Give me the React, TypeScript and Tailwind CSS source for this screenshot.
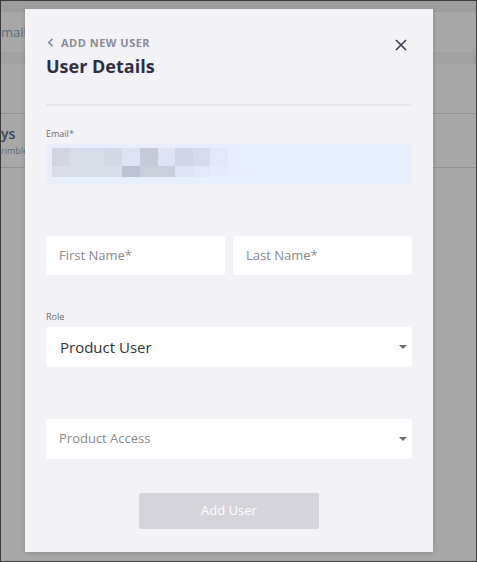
import React from "react";

const row1 = [
  "bg-[#d0d5e0]",
  "bg-[#d7dce7]",
  "bg-[#d7dce7]",
  "bg-[#d4d9e4]",
  "bg-[#dee3f0]",
  "bg-[#c6cbd6]",
  "bg-[#dfe4f1]",
  "bg-[#d1d6e2]",
  "bg-[#d7dce8]",
  "bg-[#e3e8f5]",
];
const row2 = [
  "bg-[#d8dde8]",
  "bg-[#d8dde8]",
  "bg-[#d8dde8]",
  "bg-[#d8dde8]",
  "bg-[#bdc2ce]",
  "bg-[#c9ced9]",
  "bg-[#c9ced9]",
  "bg-[#dfe4f0]",
  "bg-[#e3e8f4]",
  "bg-[#e6ebf7]",
];

function Caret() {
  return (
    <svg width="8" height="4" viewBox="0 0 8 4" className="shrink-0">
      <polygon points="0,0 8,0 4,4" fill="#6b6b6b" />
    </svg>
  );
}

export default function App() {
  return (
    <div className="w-[477px] h-[562px] relative overflow-hidden border border-[#3a3a3a] bg-[#a7a7a7] font-['Open_Sans',sans-serif]">
      {/* background page (dimmed) */}
      <div className="h-[11px] bg-[#9d9d9d]" />
      <div className="h-[40px] flex items-center">
        <span className="text-[13px] leading-[16px] text-[#566a80]">mail</span>
      </div>
      <div className="h-[12px] bg-[#a1a1a1]" />
      <div className="h-[50px] border-b border-[#909090]" />
      <div className="h-[54px] border-b border-[#909090] flex flex-col justify-center">
        <span className="text-[14px] leading-[18px] font-semibold text-[#3c4656]">ys</span>
        <span className="mt-[2px] text-[9px] leading-[12px] text-[#676767] whitespace-nowrap">rimble</span>
      </div>

      {/* modal */}
      <div className="absolute left-[24px] top-[8px] w-[408px] h-[543px] bg-[#f3f2f7] shadow-[0_1px_4px_rgba(0,0,0,0.18)] px-[21px] pt-[26px] flex flex-col">
        <div className="flex justify-between items-start">
          <div className="flex flex-col">
            <div className="flex items-center h-[15px]">
              <svg width="7" height="9" viewBox="0 0 7 9" className="ml-[1px]">
                <polyline points="5.5,0.8 1.8,4.5 5.5,8.2" fill="none" stroke="#8b8a97" strokeWidth="1.7" />
              </svg>
              <span className="ml-[7px] text-[11px] leading-[15px] font-bold tracking-[0.5px] text-[#8b8a97]">ADD NEW USER</span>
            </div>
            <div className="mt-[4px] text-[18px] leading-[24px] font-bold text-[#2e2f45]">User Details</div>
          </div>
          <button className="mt-[4px] mr-[5px] w-[12px] h-[12px] flex items-center justify-center">
            <svg width="12" height="12" viewBox="0 0 12 12">
              <path d="M1 1 L11 11 M11 1 L1 11" stroke="#3a3a4e" strokeWidth="1.6" fill="none" />
            </svg>
          </button>
        </div>

        <div className="mt-[26px] h-[2px] bg-[#e7e6ed]" />

        <div className="mt-[22px] text-[9px] leading-[12px] text-[#6e6e6e]">Email*</div>
        <div className="mt-[4px] h-[40px] bg-[#e8effc] rounded-[2px] pl-[6px] pt-[4px]">
          <div className="w-[176px] grid grid-cols-10">
            {row1.map((c, i) => (
              <div key={"a" + i} className={"h-[18px] " + c} />
            ))}
            {row2.map((c, i) => (
              <div key={"b" + i} className={"h-[11px] " + c} />
            ))}
          </div>
        </div>

        <div className="mt-[52px] flex gap-[8px]">
          <div className="flex-1 h-[39px] bg-white rounded-[2px] flex items-center px-[13px]">
            <span className="text-[13px] text-[#8a8a8a]">First Name*</span>
          </div>
          <div className="flex-1 h-[39px] bg-white rounded-[2px] flex items-center px-[13px]">
            <span className="text-[13px] text-[#8a8a8a]">Last Name*</span>
          </div>
        </div>

        <div className="mt-[36px] text-[9px] leading-[12px] text-[#6e6e6e]">Role</div>
        <div className="mt-[4px] h-[40px] bg-white rounded-[2px] flex items-center justify-between pl-[14px] pr-[5px]">
          <span className="text-[15px] text-[#333333]">Product User</span>
          <Caret />
        </div>

        <div className="mt-[52px] h-[40px] bg-white rounded-[2px] flex items-center justify-between pl-[13px] pr-[5px]">
          <span className="text-[13px] text-[#8a8a8a]">Product Access</span>
          <Caret />
        </div>

        <div className="mt-[34px] flex justify-center">
          <button className="w-[180px] h-[36px] bg-[#d5d4da] rounded-[2px] text-[13px] text-white">Add User</button>
        </div>
      </div>
    </div>
  );
}
